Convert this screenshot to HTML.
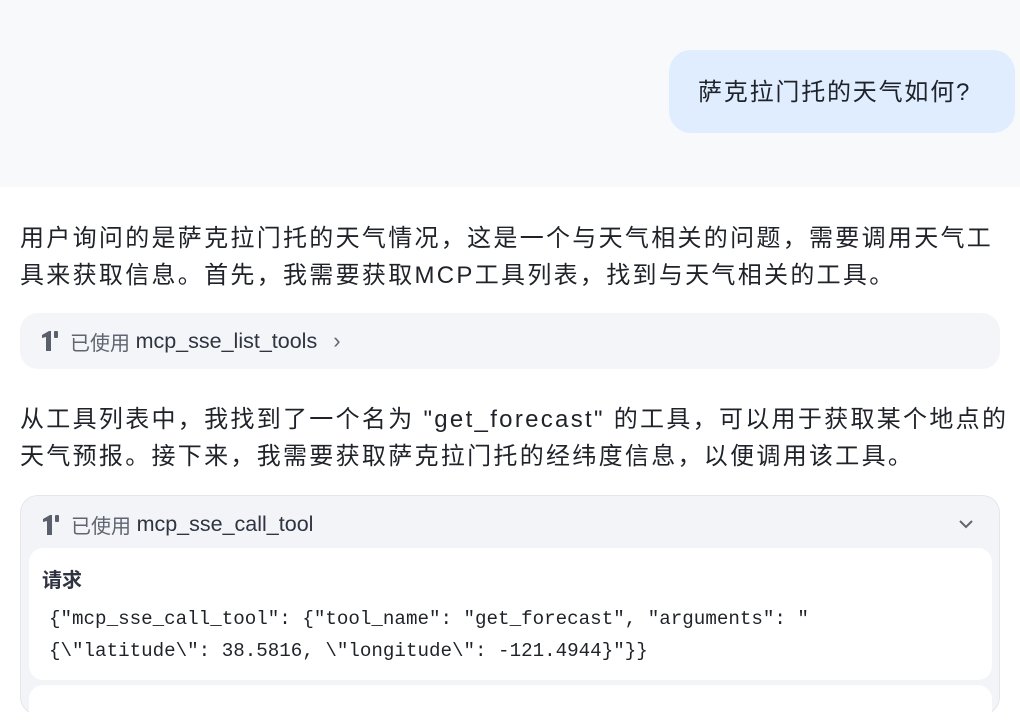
<!DOCTYPE html>
<html><head><meta charset="utf-8"><style>
*{margin:0;padding:0;box-sizing:border-box}
body{width:1020px;height:692px;overflow:hidden;background:#fff;font-family:"Liberation Sans","Noto Sans CJK SC",sans-serif;color:#1f2329}
.top{height:187px;background:#f8f9fb;position:relative}
.bubble{position:absolute;left:669px;top:50px;width:346px;height:83px;background:#dfedff;border-radius:22px;font-size:24px;letter-spacing:1.8px;line-height:86px;padding-left:29px;color:#1f2329}
.p{position:absolute;left:20px;font-size:24px;letter-spacing:2.3px;line-height:37px;width:1000px;white-space:nowrap}
.pill{position:absolute;left:20px;top:313px;width:980px;height:56px;background:#f4f5f8;border-radius:18px;font-size:20px;color:#5f6470;display:flex;align-items:center;padding-left:20px}
.pill b,.hdr b{font-weight:normal;color:#2e3440;font-size:21.5px}
.ic{margin-right:10px}
.box{position:absolute;left:20px;top:495px;width:980px;height:220px;background:#f3f4f8;border:1px solid #e4e6ea;border-radius:18px}
.hdr{position:absolute;left:20px;top:14px;font-size:20px;color:#5f6470;display:flex;align-items:center}
.card{position:absolute;left:8px;top:52px;width:963px;height:132px;background:#fff;border-radius:14px}
.card h4{position:absolute;left:13px;top:16px;font-size:20px;color:#2e3440}
.code{position:absolute;left:20px;top:55px;font-family:"Liberation Mono",monospace;font-size:19.2px;line-height:32px;color:#1f2329}
.card2{position:absolute;left:8px;top:189px;width:963px;height:40px;background:#fff;border-radius:14px}
</style></head><body>
<div class="top"><div class="bubble">萨克拉门托的天气如何?</div></div>
<div class="p" style="top:220px">用户询问的是萨克拉门托的天气情况，这是一个与天气相关的问题，需要调用天气工<br>具来获取信息。首先，我需要获取MCP工具列表，找到与天气相关的工具。</div>
<div class="pill"><svg class="ic" width="20" height="22" viewBox="0 0 20 22"><path d="M2 5 L9 1 H11 V21 H6 V7 L2 8 Z" fill="#5a606b"/><rect x="14" y="1" width="4" height="7" rx="1" fill="#5a606b"/></svg>已使用&nbsp;<b>mcp_sse_list_tools</b><span style="margin-left:16px;color:#5f6470;font-size:22px">›</span></div>
<div class="p" style="top:401px">从工具列表中，我找到了一个名为 "get_forecast" 的工具，可以用于获取某个地点的<br>天气预报。接下来，我需要获取萨克拉门托的经纬度信息，以便调用该工具。</div>
<div class="box">
<div class="hdr"><svg class="ic" width="20" height="22" viewBox="0 0 20 22"><path d="M2 5 L9 1 H11 V21 H6 V7 L2 8 Z" fill="#5a606b"/><rect x="14" y="1" width="4" height="7" rx="1" fill="#5a606b"/></svg>已使用&nbsp;<b>mcp_sse_call_tool</b></div>
<svg style="position:absolute;right:26px;top:24px" width="14" height="9" viewBox="0 0 14 9"><path d="M1 1 L7 7 L13 1" stroke="#5f6470" stroke-width="2" fill="none"/></svg>
<div class="card"><h4>请求</h4>
<div class="code">{"mcp_sse_call_tool": {"tool_name": "get_forecast", "arguments": "<br>{\"latitude\": 38.5816, \"longitude\": -121.4944}"}}</div></div>
<div class="card2"></div>
</div>
</body></html>
